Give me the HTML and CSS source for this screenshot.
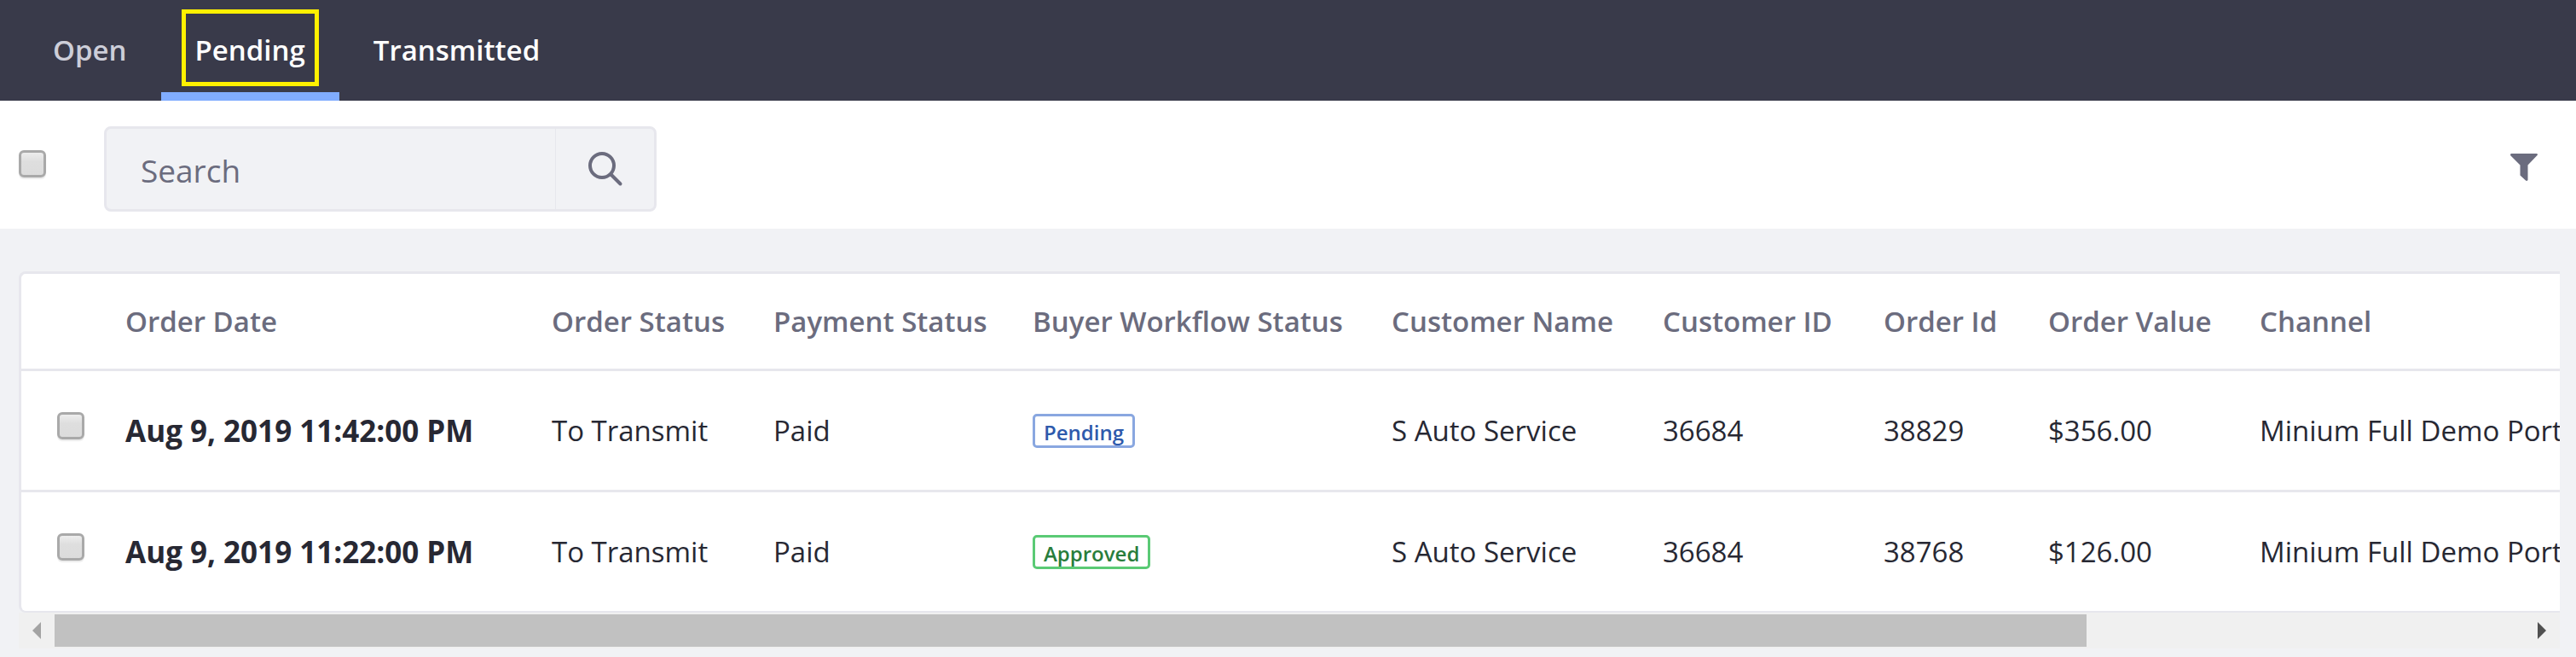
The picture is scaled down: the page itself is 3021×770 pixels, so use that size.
FILE: index.html
```html
<!DOCTYPE html>
<html lang="en">
<head>
<meta charset="utf-8">
<title>Orders - Pending</title>
<link rel="stylesheet" href="styles.css">
</head>
<body>
<nav class="tabs" aria-label="Order state">
  <a class="tab tab-muted" href="#open">Open</a>
  <a class="tab tab-active" href="#pending" aria-current="page">Pending</a>
  <a class="tab" href="#transmitted">Transmitted</a>
</nav>

<form class="toolbar" role="search">
  <input class="check" type="checkbox" aria-label="Select all orders">
  <div class="search">
    <input class="search-input" type="text" placeholder="Search" aria-label="Search">
    <button class="search-button" type="button" aria-label="Search">
      <svg class="search-icon" viewBox="0 0 42 42" aria-hidden="true">
        <circle cx="17" cy="17" r="14"/>
        <path d="M27.5 27.5 38.5 38.5"/>
      </svg>
    </button>
  </div>
  <button class="filter-button" type="button" aria-label="Filter">
    <svg class="filter-icon" viewBox="0 0 32 32" aria-hidden="true">
      <path d="M1 0h30q1 0 1 1.500L20.500 13.500V31q-1 1.500-2.500 .5L11.500 25.500V13.500L0 2Q0 0 1 0z"/>
    </svg>
  </button>
</form>

<main class="content">
  <div class="table-frame">
    <table class="orders">
      <colgroup>
        <col class="col-check"><col class="col-date"><col class="col-status"><col class="col-payment"><col class="col-workflow"><col class="col-customer"><col class="col-customer-id"><col class="col-order-id"><col class="col-value"><col class="col-channel">
      </colgroup>
      <thead>
        <tr>
          <td></td>
          <th scope="col">Order Date</th>
          <th scope="col">Order Status</th>
          <th scope="col">Payment Status</th>
          <th scope="col">Buyer Workflow Status</th>
          <th scope="col">Customer Name</th>
          <th scope="col">Customer ID</th>
          <th scope="col">Order Id</th>
          <th scope="col">Order Value</th>
          <th scope="col">Channel</th>
        </tr>
      </thead>
      <tbody>
        <tr>
          <td class="cell-check"><input class="check" type="checkbox" aria-label="Select order 38829"></td>
          <td class="cell-date">Aug 9, 2019 11:42:00 PM</td>
          <td>To Transmit</td>
          <td>Paid</td>
          <td><span class="badge badge-pending">Pending</span></td>
          <td>S Auto Service</td>
          <td>36684</td>
          <td>38829</td>
          <td>$356.00</td>
          <td>Minium Full Demo Portal</td>
        </tr>
        <tr>
          <td class="cell-check"><input class="check" type="checkbox" aria-label="Select order 38768"></td>
          <td class="cell-date">Aug 9, 2019 11:22:00 PM</td>
          <td>To Transmit</td>
          <td>Paid</td>
          <td><span class="badge badge-approved">Approved</span></td>
          <td>S Auto Service</td>
          <td>36684</td>
          <td>38768</td>
          <td>$126.00</td>
          <td>Minium Full Demo Portal</td>
        </tr>
      </tbody>
    </table>
  </div>
  <div class="scrollbar" aria-hidden="true">
    <svg class="scroll-arrow scroll-arrow-left" viewBox="0 0 10 20"><path d="M10 0v20L0 10z"/></svg>
    <div class="scroll-track"><div class="scroll-thumb"></div></div>
    <svg class="scroll-arrow scroll-arrow-right" viewBox="0 0 10 20"><path d="M0 0v20l10-10z"/></svg>
  </div>
</main>
</body>
</html>
```
FILE: styles.css
```css
*,
*::before,
*::after {
  box-sizing: border-box;
}

body {
  margin: 0;
  background: #f1f2f5;
  color: #272833;
  font-family: "Segoe UI", "Open Sans", sans-serif;
  font-size: 33px;
}

/* Tabs */
.tabs {
  display: flex;
  height: 118px;
  padding-left: 22px;
  background: #393a4a;
}

.tab {
  position: relative;
  display: flex;
  align-items: center;
  padding: 0 40px 2px;
  color: #fff;
  font-weight: 600;
  text-decoration: none;
}

.tab-muted {
  color: #cdced9;
}

.tab-active {
  padding-top: 8px;
  padding-bottom: 0;
  border-bottom: 10px solid #80acff;
}

.tab-active::after {
  content: "";
  position: absolute;
  top: 11px;
  right: 24px;
  left: 24px;
  height: 90px;
  border: 5px solid #fff000;
}

/* Toolbar */
.toolbar {
  display: flex;
  align-items: center;
  height: 150px;
  padding: 10px 37px 0 22px;
  background: #fff;
}

.check {
  appearance: none;
  flex: none;
  width: 32px;
  height: 32px;
  margin: 0 0 12px;
  border: 3px solid #a9a9a9;
  border-radius: 6px;
  background: linear-gradient(#ededed, #dedede 40%, #dcdcdc);
  box-shadow: 0 2px 1px #ececec;
}

.search {
  display: flex;
  width: 648px;
  height: 100px;
  margin-left: 68px;
  border: 3px solid #e7e7ed;
  border-radius: 8px;
  background: #f1f2f5;
}

.search-input {
  flex: 1;
  min-width: 0;
  padding: 2px 40px 0;
  border: 0;
  border-right: 1px solid #e7e7ed;
  background: transparent;
  color: #272833;
  font: inherit;
  font-size: 37px;
}

.search-input::placeholder {
  color: #6b6c7e;
  opacity: 1;
}

.search-button {
  display: flex;
  align-items: center;
  justify-content: center;
  width: 115px;
  padding: 0;
  border: 0;
  background: transparent;
}

.search-icon {
  width: 42px;
  height: 42px;
  fill: none;
  stroke: #6b6c7e;
  stroke-width: 4;
  stroke-linecap: round;
}

.filter-button {
  margin: 0 0 4px auto;
  padding: 8px;
  border: 0;
  background: transparent;
}

.filter-icon {
  display: block;
  width: 32px;
  height: 32px;
  fill: #6b6c7e;
}

/* Orders table */
.content {
  padding: 50px 19px 10px 22px;
}

.table-frame {
  overflow: hidden;
  border: solid #e7e7ed;
  border-width: 3px 0 2px 3px;
  border-radius: 8px 0 0 8px;
  background: #fff;
}

.orders {
  width: 3600px;
  border-collapse: separate;
  border-spacing: 0;
  table-layout: fixed;
}

.col-check { width: 92px; }
.col-date { width: 500px; }
.col-status { width: 260px; }
.col-payment { width: 304px; }
.col-workflow { width: 421px; }
.col-customer { width: 318px; }
.col-customer-id { width: 259px; }
.col-order-id { width: 193px; }
.col-value { width: 248px; }

.orders th,
.orders td {
  height: 142px;
  padding: 0 0 0 30px;
  text-align: left;
  vertical-align: middle;
  white-space: nowrap;
}

.orders thead th,
.orders thead td {
  height: 114px;
  border-bottom: 3px solid #e7e7ed;
  color: #6b6c7e;
  font-weight: 600;
}

.orders tbody td {
  border-bottom: 3px solid #e7e7ed;
}

.orders tbody tr:last-child td {
  height: 139px;
  border-bottom: 0;
}

.orders .cell-check {
  padding-left: 42px;
}

.cell-check .check {
  display: block;
}

.orders .cell-date {
  font-size: 35px;
  font-weight: 700;
}

.badge {
  display: block;
  width: fit-content;
  height: 40px;
  padding: 0 10px;
  border: 3px solid;
  border-radius: 5px;
  font-size: 24px;
  font-weight: 600;
  line-height: 38px;
}

.badge-pending {
  border-color: #89a7e0;
  color: #2e5aac;
}

.badge-approved {
  border-color: #5aca75;
  color: #287d3c;
}

/* Horizontal scroll indicator */
.scrollbar {
  display: flex;
  align-items: center;
  height: 42px;
  padding: 0 16px;
  background: #f0f0f0;
}

.scroll-arrow {
  flex: none;
  width: 10px;
  height: 20px;
}

.scroll-arrow-left {
  fill: #a3a3a3;
}

.scroll-arrow-right {
  fill: #505050;
}

.scroll-track {
  flex: 1;
  margin: 0 16px;
}

.scroll-thumb {
  width: 82.3%;
  height: 38px;
  background: #c1c1c1;
}
```
